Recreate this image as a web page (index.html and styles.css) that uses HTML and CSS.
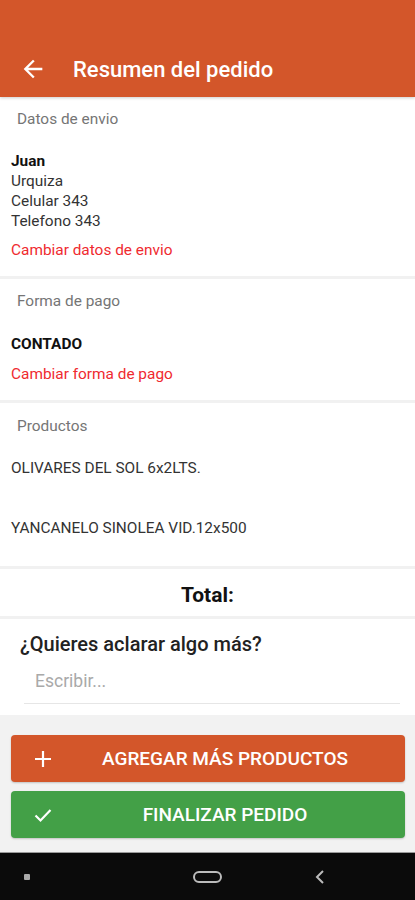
FILE: index.html
```html
<!DOCTYPE html>
<html lang="es">
<head>
    <meta charset="UTF-8">
    <meta name="viewport" content="width=device-width, initial-scale=1.0">
    <title>Resumen del pedido</title>
    <link rel="stylesheet" href="styles.css">
</head>
<body>
    <div class="screen">
        <div class="appbar">
            <div class="toolbar">
                <button class="back-btn">
                    <svg width="28" height="28" viewBox="0 0 24 24"><path d="M20 11H7.83l5.59-5.59L12 4l-8 8 8 8 1.41-1.41L7.83 13H20v-2z" fill="#fff"/></svg>
                </button>
                <div class="title">Resumen del pedido</div>
            </div>
        </div>

        <div class="content">
            <div class="section section-envio">
                <div class="section-title">Datos de envio</div>
                <div class="lines">
                    <div class="name">Juan</div>
                    <div>Urquiza</div>
                    <div>Celular 343</div>
                    <div>Telefono 343</div>
                </div>
                <a class="change-link">Cambiar datos de envio</a>
            </div>

            <div class="section section-pago">
                <div class="section-title">Forma de pago</div>
                <div class="lines">
                    <div class="name">CONTADO</div>
                </div>
                <a class="change-link">Cambiar forma de pago</a>
            </div>

            <div class="section section-productos">
                <div class="section-title">Productos</div>
                <div class="product">OLIVARES DEL SOL 6x2LTS.</div>
                <div class="product">YANCANELO SINOLEA VID.12x500</div>
            </div>

            <div class="section total">Total:</div>

            <div class="note">
                <div class="note-title">¿Quieres aclarar algo más?</div>
                <input class="note-input" type="text" placeholder="Escribir...">
            </div>
        </div>

        <div class="actions">
            <button class="action-btn add-btn">
                <svg width="18" height="18" viewBox="0 0 18 18"><path d="M9 1v16M1 9h16" stroke="#fff" stroke-width="2.2"/></svg>
                <span>AGREGAR MÁS PRODUCTOS</span>
            </button>
            <button class="action-btn finish-btn">
                <svg width="18" height="18" viewBox="0 0 18 18"><path d="M1.5 9.5l5 5 10-10.5" stroke="#fff" stroke-width="2.2" fill="none"/></svg>
                <span>FINALIZAR PEDIDO</span>
            </button>
        </div>

        <div class="navbar">
            <span class="nav-square"></span>
            <span class="nav-home"></span>
            <svg class="nav-back" width="10" height="16" viewBox="0 0 10 16"><path d="M8 2L2 8l6 6" stroke="#bbb" stroke-width="2" fill="none"/></svg>
        </div>
    </div>
</body>
</html>
```

FILE: styles.css
```css
body {
    margin: 0;
    padding: 0;
    font-family: Roboto, "Noto Sans", sans-serif;
    background: #fff;
}
.screen {
    width: 415px;
    height: 900px;
    display: flex;
    flex-direction: column;
    overflow: hidden;
}
.appbar {
    flex-shrink: 0;
    height: 97px;
    background: #d3562a;
    display: flex;
    flex-direction: column;
    justify-content: flex-end;
    box-shadow: 0 1px 3px rgba(0, 0, 0, 0.2);
}
.toolbar {
    height: 56px;
    display: flex;
    align-items: center;
}
.back-btn {
    border: none;
    background: transparent;
    padding: 0;
    margin-left: 19px;
    width: 28px;
    height: 28px;
    display: flex;
}
.title {
    margin-left: 26px;
    color: #fff;
    font-size: 22px;
    font-weight: 500;
}
.content {
    flex: 1;
    min-height: 0;
    overflow: hidden;
    display: flex;
    flex-direction: column;
}
.section {
    flex-shrink: 0;
    padding: 12px 11px 0;
    border-bottom: 3px solid #f1f1f1;
}
.section-title {
    font-size: 15.4px;
    line-height: 20px;
    color: #757575;
    padding-left: 6px;
}
.lines {
    margin-top: 22px;
    font-size: 15.4px;
    line-height: 20px;
    color: #333;
}
.lines .name {
    font-weight: bold;
    color: #111;
}
.change-link {
    display: block;
    margin-top: 9px;
    font-size: 15.4px;
    line-height: 20px;
    color: #ef2a2f;
}
.section-envio {
    padding-bottom: 16px;
}
.section-pago {
    padding-top: 12px;
    padding-bottom: 16px;
}
.section-pago .lines {
    margin-top: 23px;
}
.section-pago .change-link {
    margin-top: 10px;
}
.section-productos {
    padding-top: 13px;
    padding-bottom: 8px;
}
.product {
    font-size: 15.4px;
    line-height: 20px;
    color: #333;
    margin-top: 22px;
}
.product + .product {
    margin-top: 40px;
}
.section-productos .product:last-child {
    margin-bottom: 20px;
}
.total {
    padding: 15px 0 10px;
    text-align: center;
    font-size: 21px;
    line-height: 22px;
    font-weight: bold;
    color: #111;
}
.note {
    flex-shrink: 0;
    padding: 14px 15px 0 20px;
}
.note-title {
    font-size: 20px;
    line-height: 22px;
    font-weight: 500;
    color: #222;
}
.note-input {
    display: block;
    margin: 9px 0 0 4px;
    width: 376px;
    box-sizing: border-box;
    border: none;
    border-bottom: 1px solid #e6e6e6;
    outline: none;
    padding: 7px 11px 12px;
    font-family: Roboto, "Noto Sans", sans-serif;
    font-size: 17.5px;
    line-height: 20px;
    color: #333;
}
.note-input::placeholder {
    color: #a9a9a9;
}
.actions {
    flex-shrink: 0;
    background: #f2f2f2;
    padding: 20px 10px 14px 11px;
    display: flex;
    flex-direction: column;
    gap: 9px;
}
.action-btn {
    height: 47px;
    border: none;
    border-radius: 4px;
    display: flex;
    align-items: center;
    padding: 0 7px 0 23px;
    color: #fff;
    font-family: Roboto, "Noto Sans", sans-serif;
    font-size: 19px;
    font-weight: 500;
    box-shadow: 0 1px 2px rgba(0, 0, 0, 0.2);
}
.action-btn span {
    flex: 1;
    text-align: center;
}
.add-btn {
    background: #d3562a;
}
.finish-btn {
    background: #43a047;
}
.navbar {
    flex-shrink: 0;
    height: 48px;
    background: #0b0b0b;
    border-top: 1px solid #9a9a9a;
    box-sizing: border-box;
    display: flex;
    align-items: center;
}
.nav-square {
    width: 6px;
    height: 6px;
    background: #aaa;
    border-radius: 1px;
    margin-left: 24px;
}
.nav-home {
    width: 25px;
    height: 8px;
    border: 2px solid #bbb;
    border-radius: 6px;
    margin-left: 163px;
}
.nav-back {
    margin-left: 93px;
}
```
